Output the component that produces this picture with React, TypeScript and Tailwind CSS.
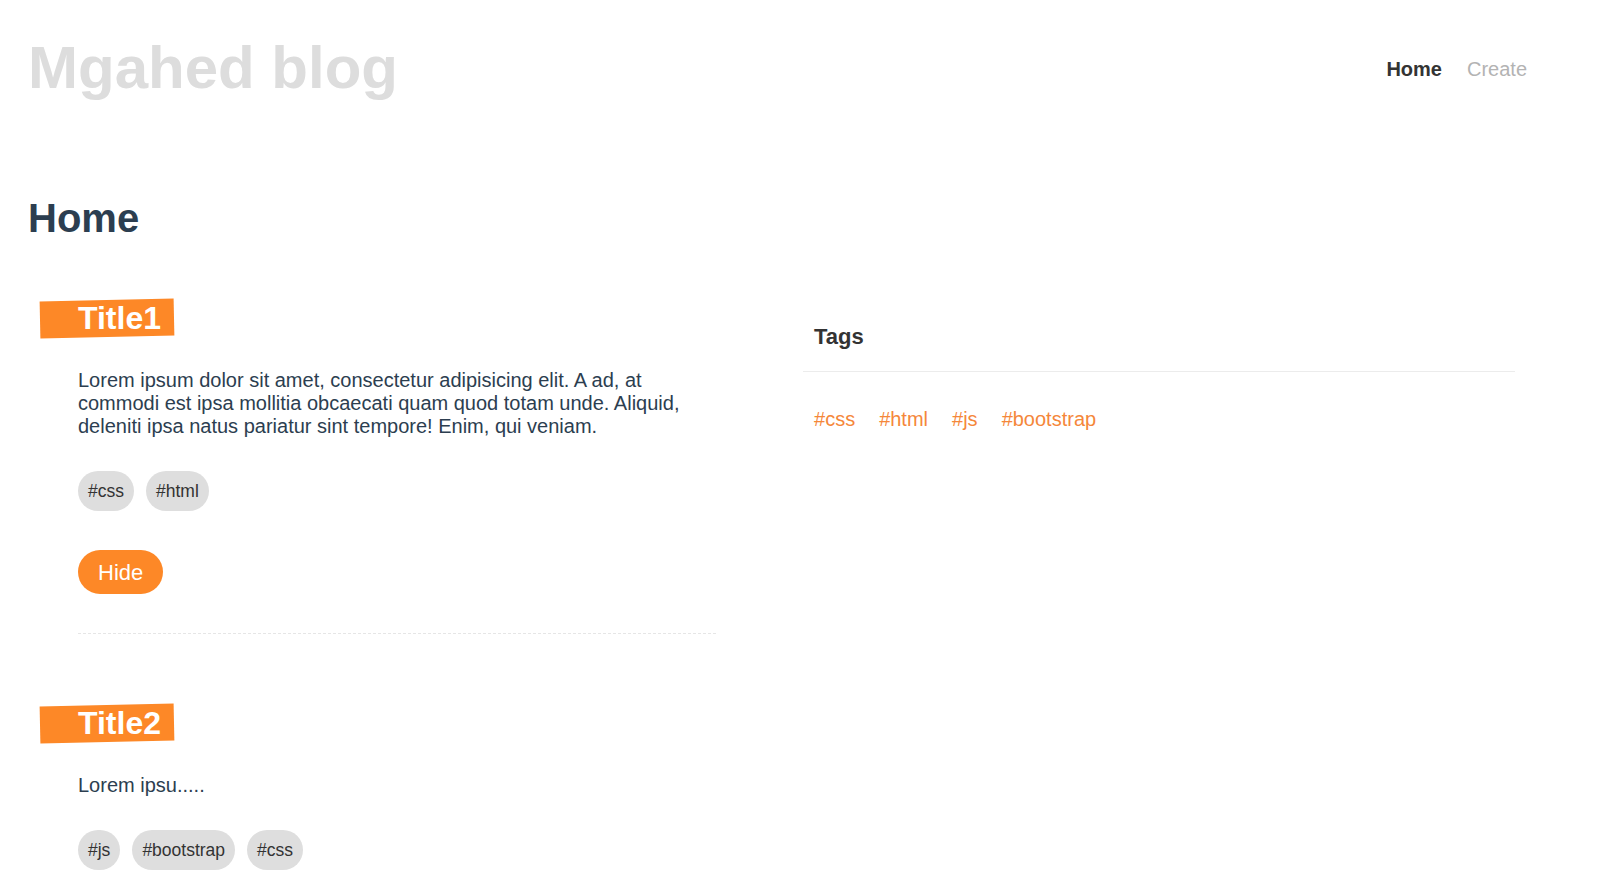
const POSTS = [
  {
    id: 1,
    title: "Title1",
    body: "Lorem ipsum dolor sit amet, consectetur adipisicing elit. A ad, at commodi est ipsa mollitia obcaecati quam quod totam unde. Aliquid, deleniti ipsa natus pariatur sint tempore! Enim, qui veniam.",
    tags: ["css", "html"],
    open: true,
  },
  {
    id: 2,
    title: "Title2",
    body: "Lorem ipsu.....",
    tags: ["js", "bootstrap", "css"],
    open: false,
  },
];

const ALL_TAGS = ["css", "html", "js", "bootstrap"];

export default function App() {
  return (
    <div className="min-h-screen bg-white font-['Liberation_Sans',Arial,sans-serif] text-[#2c3e50]">
      {/* Header */}
      <header className="flex items-start justify-between pl-[28px] pr-[78px] pt-[38px]">
        <h1 className="text-[60px] font-bold leading-none text-[#dddddd]">Mgahed blog</h1>
        <nav className="mt-[21px] flex gap-[25px] text-[20px] leading-none">
          <a className="font-bold text-[#333333]">Home</a>
          <a className="text-[#b3b3b3]">Create</a>
        </nav>
      </header>

      <main className="pl-[28px] pr-[90px]">
        <h2 className="mt-[100px] text-[40px] font-bold leading-none">Home</h2>

        <div className="flex items-start">
          {/* Posts */}
          <div className="w-[775px]">
            {POSTS.map((post, i) => (
              <PostItem key={post.id} post={post} first={i === 0} />
            ))}
          </div>

          {/* Tags sidebar */}
          <aside className="mt-[88px] w-[712px]">
            <div className="border-b border-[#ececec] pb-[23px] pl-[11px]">
              <h3 className="text-[22px] font-bold leading-none text-[#333333]">Tags</h3>
            </div>
            <div className="mt-[32px] flex gap-[24px] pl-[11px] text-[20px] text-[#f5873a]">
              {ALL_TAGS.map((t) => (
                <span key={t}>#{t}</span>
              ))}
            </div>
          </aside>
        </div>
      </main>
    </div>
  );
}

function PostItem({ post, first }: { post: (typeof POSTS)[number]; first: boolean }) {
  return (
    <div className={first ? "ml-[50px] mt-[62px]" : "ml-[50px] mt-[71px]"}>
      <div className="relative -ml-[38px] inline-block h-[37px] pl-[38px] pr-[13px] text-[32px] font-bold leading-[37px] text-white">
        <span className="absolute inset-0 rotate-[-1.2deg] bg-[#fd8827]" />
        <span className="relative">{post.title}</span>
      </div>

      <p className={first ? "mt-[32px] w-[625px] text-[20px] leading-[23px]" : "mt-[32px] w-[625px] text-[20px] leading-[23px]"}>
        {post.body}
      </p>

      <div className="mt-[33px] flex gap-[12px]">
        {post.tags.map((t) => (
          <span
            key={t}
            className="flex h-[40px] items-center rounded-full bg-[#dedede] px-[10px] text-[17.5px] text-[#333333]"
          >
            #{t}
          </span>
        ))}
      </div>

      {post.open && (
        <>
          <button className="mt-[39px] flex h-[44px] items-center rounded-full bg-[#fd8827] px-[20px] text-[22px] text-white">
            Hide
          </button>
          <div className="mt-[39px] w-[638px] border-t border-dashed border-[#e6e6e6]" />
        </>
      )}
    </div>
  );
}
